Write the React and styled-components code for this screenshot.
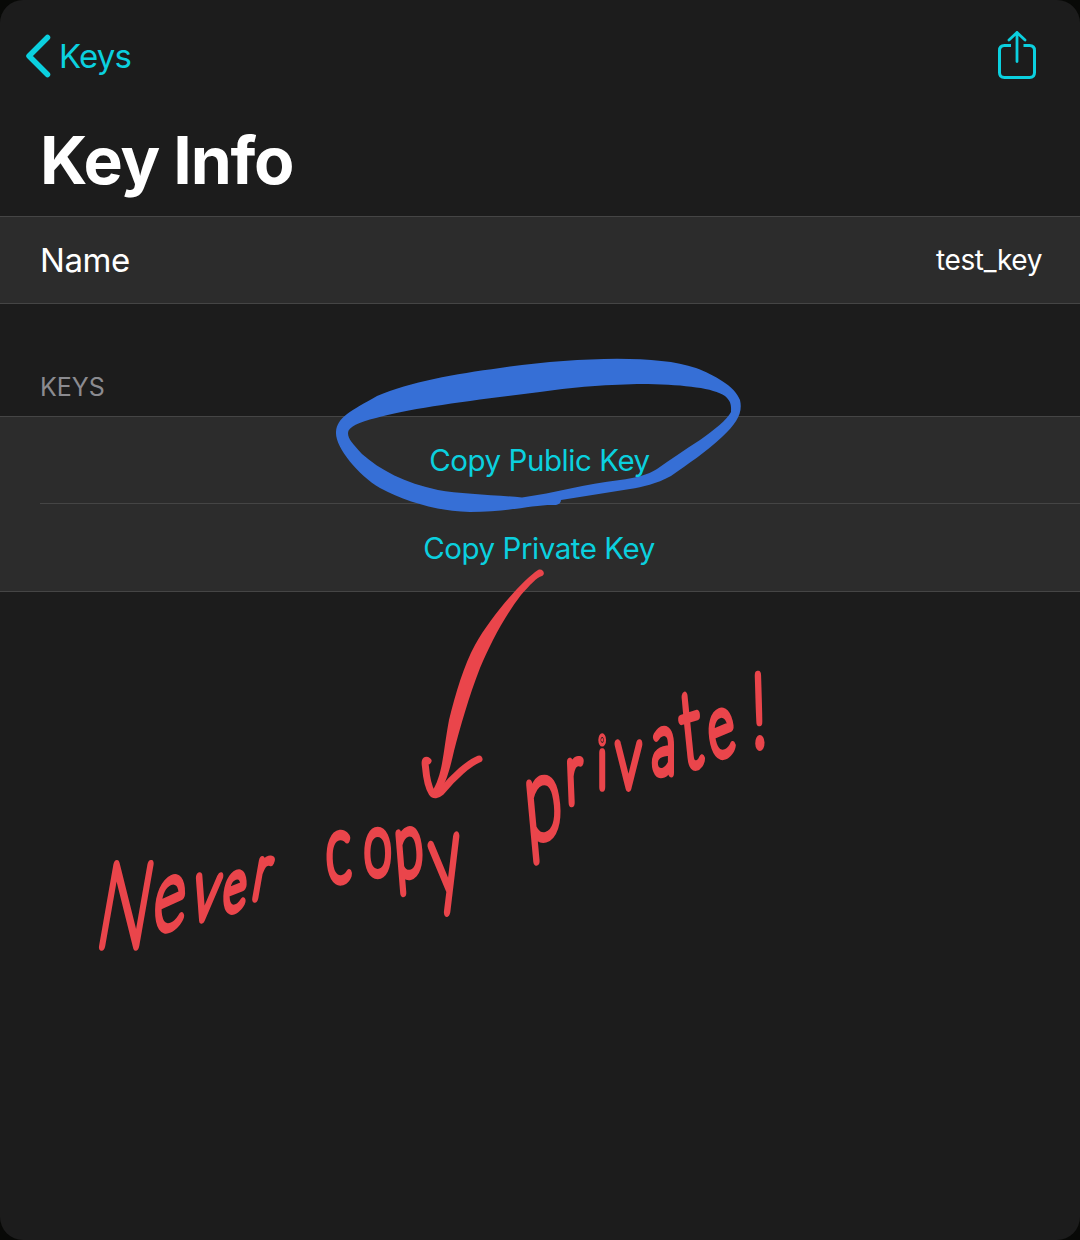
import React from "react";
import styled, { createGlobalStyle } from "styled-components";

const GlobalStyle = createGlobalStyle`
  *, *::before, *::after { box-sizing: border-box; }
  body { margin: 0; background: #080907; }
`;

const Screen = styled.main`
  position: relative;
  display: flex;
  flex-direction: column;
  width: 1080px;
  height: 1240px;
  overflow: hidden;
  border-radius: 23px;
  background: #1c1c1c;
  color: #fff;
  font-family: Inter, "Liberation Sans", sans-serif;
`;

const NavBar = styled.nav`
  display: flex;
  align-items: center;
  justify-content: space-between;
  height: 112px;
  padding: 0 43px 0 24px;
`;

const BackButton = styled.button`
  display: flex;
  align-items: center;
  gap: 8px;
  padding: 0;
  border: 0;
  background: none;
  color: #0bd0df;
  font: 400 33px/44px Inter, sans-serif;
  letter-spacing: -0.8px;
`;

const ShareButton = styled.button`
  display: flex;
  padding: 0 0 2px;
  border: 0;
  background: none;
  color: #0bd0df;
`;

const Title = styled.h1`
  margin: 0;
  height: 104px;
  padding: 8px 40px 0;
  font-size: 66px;
  line-height: 80px;
  font-weight: 700;
  letter-spacing: -1.25px;
`;

const Group = styled.section`
  border-top: 1px solid #454545;
  border-bottom: 1px solid #454545;
  background: #2c2c2c;
`;

const InfoRow = styled.div`
  display: flex;
  align-items: center;
  justify-content: space-between;
  height: 86px;
  padding: 0 38px 0 40px;
`;

const Label = styled.span`
  font-size: 33px;
  line-height: 40px;
  letter-spacing: -0.4px;
`;

const Value = styled.span`
  font-size: 28px;
  line-height: 40px;
  letter-spacing: -0.4px;
`;

const SectionHeader = styled.h2`
  margin: 0;
  height: 112px;
  padding: 67px 40px 0;
  color: #8b8b90;
  font-size: 25px;
  line-height: 32px;
  font-weight: 400;
`;

const ActionRow = styled.button`
  display: flex;
  align-items: center;
  justify-content: center;
  width: 100%;
  height: ${(p) => (p.$first ? 86 : 88)}px;
  padding: ${(p) => (p.$first ? "0 1px 0 0" : "1px 2px 0 0")};
  border: 0;
  background: ${(p) =>
    p.$first ? "none" : "linear-gradient(#454545, #454545) 40px 0 / 100% 1px no-repeat"};
  color: #0bd0df;
  font: 400 29.5px/40px Inter, sans-serif;
  letter-spacing: -0.45px;
`;

const ActionText = styled.span`
  position: relative;
  z-index: 2;
`;

const Ink = styled.svg`
  position: absolute;
  inset: 0;
  z-index: 1;
  pointer-events: none;
`;

const Handwriting = styled.text`
  font-family: Lato, sans-serif;
  font-weight: 100;
  fill: #ea454b;
  stroke: #ea454b;
  stroke-width: 9.5px;
  stroke-linecap: round;
  stroke-linejoin: round;
`;

/* Each glyph: [character, left, baseline, font size, rotation]. */
const words = [
  {
    squeeze: 0.58,
    slant: -10,
    glyphs: [["N", 94, 946, 116, 0], ["e", 154, 935, 100, -16], ["v", 190, 919, 86, 0], ["e", 223, 914, 72, -14], ["r", 251, 898, 76, 0]],
  },
  {
    squeeze: 0.58,
    slant: 0,
    glyphs: [["c", 327, 882, 92, -4], ["o", 364, 874, 86, 0], ["p", 397, 878, 88, -8], ["y", 435, 897, 106, -12]],
  },
  {
    squeeze: 0.58,
    slant: 0,
    glyphs: [["p", 528, 842, 116, -9], ["r", 567, 803, 82, -4], ["i", 598, 787, 70, 0], ["v", 616, 787, 88, 0], ["a", 652, 773, 86, 0], ["t", 684, 769, 106, -10], ["e", 712, 760, 86, -14], ["!", 753, 746, 100, -3]],
  },
];

function Word({ squeeze, slant, glyphs }) {
  const shear = Math.tan((slant * Math.PI) / 180);
  return (
    <Handwriting transform={`matrix(${squeeze} 0 ${shear} 1 0 0)`}>
      {glyphs.map(([char, x, y, size, turn], i) => (
        <tspan key={i} x={(x - shear * y) / squeeze} y={y} fontSize={size} rotate={turn}>
          {char}
        </tspan>
      ))}
    </Handwriting>
  );
}

function Annotations() {
  return (
    <Ink width="1080" height="1240" viewBox="0 0 1080 1240">
      <path
        fill="#366fd6"
        fillRule="evenodd"
        d="M336 432C337 417 351 411 377 396C410 382 455 374 500 368C540 362 580 359 617 358.7C650 359 676 361 696 368C714 375 735 386 740 400C743 413 737 423 722 437C706 452 688 464 671 476C656 484 643 487 630 489L561 500Q561 504 556 505C535 504 510 512 470 512C435 511 405 501 380 488C358 475 335 447 336 432Z
        M348 433C348 427 359 422 376 418C410 408 475 400 540 392C580 386 620 384 648 384C686 385 713 388 725 396C732 402 731 407 731 412C727 420 714 430 700 440C684 450 670 460 657 469C648 475 635 478 620 480C585 484 555 493 522 497.5C495 495 460 494 438 490C405 483 380 470 362 454C353 444 348 439 348 433Z"
      />
      <path
        fill="#ea454b"
        d="M538 570C543 568 546 574 542 576C537 577 530 585 521 595C502 620 490 645 480 668C469 696 460 728 454 751C450 769 445 787 437 797L431 793C443 776 443 752 449 720C456 692 464 665 475 645C491 616 523 580 538 570Z"
      />
      <path
        fill="none"
        stroke="#ea454b"
        strokeWidth="7"
        strokeLinecap="round"
        strokeLinejoin="round"
        d="M428 761Q424 758 425.500 767Q427 785 432 793Q435 797 441 792C454 776 469 763 479 759"
      />
      {words.map((word, i) => (
        <Word key={i} {...word} />
      ))}
    </Ink>
  );
}

export default function App() {
  return (
    <>
      <GlobalStyle />
      <Screen>
        <NavBar>
          <BackButton>
            <svg width="27" height="44" viewBox="0 0 27 44" fill="none">
              <path d="M23.500 3.500 5 22 23.500 40.500" stroke="currentColor" strokeWidth="5.500" strokeLinecap="round" strokeLinejoin="round" />
            </svg>
            Keys
          </BackButton>
          <ShareButton aria-label="Share">
            <svg width="40" height="50" viewBox="0 0 40 50" fill="none" stroke="currentColor" strokeWidth="3">
              <path d="M14 15.500H7.500Q2.500 15.500 2.500 20.500V42.500Q2.500 47.500 7.500 47.500H32.500Q37.500 47.500 37.500 42.500V20.500Q37.500 15.500 32.500 15.500H26.500" />
              <path d="M20 31.500V2.500M12 10 20 2.500 28 10" strokeWidth="2.800" strokeLinecap="round" strokeLinejoin="round" />
            </svg>
          </ShareButton>
        </NavBar>
        <Title>Key Info</Title>
        <Group>
          <InfoRow>
            <Label>Name</Label>
            <Value>test_key</Value>
          </InfoRow>
        </Group>
        <SectionHeader>KEYS</SectionHeader>
        <Group>
          <ActionRow $first>
            <ActionText>Copy Public Key</ActionText>
          </ActionRow>
          <ActionRow>
            <ActionText>Copy Private Key</ActionText>
          </ActionRow>
        </Group>
        <Annotations />
      </Screen>
    </>
  );
}
